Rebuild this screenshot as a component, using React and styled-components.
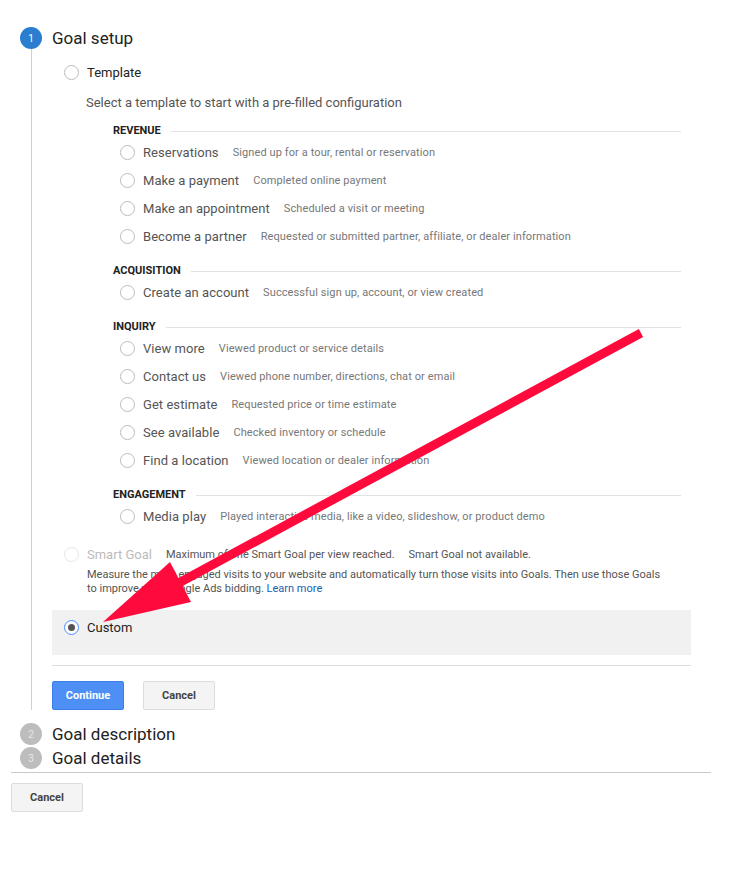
import React from "react";
import styled, { createGlobalStyle } from "styled-components";

const Global = createGlobalStyle`
  html, body { margin: 0; padding: 0; background: #fff; }
  body { font-family: Roboto, "Noto Sans", Arial, sans-serif; color: #222; }
`;

const Page = styled.div`
  position: relative;
  width: 753px;
  min-height: 878px;
`;

const Wizard = styled.div`
  margin-left: 11px;
  width: 700px;
  padding-top: 27px;
`;

const Steps = styled.div`
  padding-left: 9px;
  border-bottom: 1px solid #c8c8c8;
`;

const Step = styled.div`
  display: grid;
  grid-template-columns: 22px 1fr;
  column-gap: 10px;
  padding-bottom: ${(p) => p.$pb || 0}px;
  position: relative;
`;

const Rail = styled.div`
  display: flex;
  flex-direction: column;
  align-items: center;
`;

const Circle = styled.div`
  width: 22px;
  height: 22px;
  border-radius: 50%;
  background: ${(p) => (p.$active ? "#2b7dd0" : "#bdbdbd")};
  color: ${(p) => (p.$active ? "#fff" : "#e8e8e8")};
  font-size: 10px;
  display: flex;
  align-items: center;
  justify-content: center;
  flex: none;
`;

const RailLine = styled.div`
  width: 1px;
  flex: 1;
  background: #cfcfcf;
`;

const Content = styled.div`
  width: 639px;
`;

const StepTitle = styled.div`
  font-size: 17px;
  line-height: 22px;
  height: 22px;
  color: #222;
`;

const OptionRow = styled.div`
  display: flex;
  align-items: center;
  height: ${(p) => p.$h || 22}px;
  margin-top: ${(p) => p.$mt || 0}px;
  padding-left: 12px;
`;

const Radio = styled.span`
  box-sizing: border-box;
  width: 15px;
  height: 15px;
  border-radius: 50%;
  border: 1px solid ${(p) => (p.$checked ? "#4d90fe" : p.$disabled ? "#e6e6e6" : "#bdbdbd")};
  background: #fff;
  display: inline-flex;
  align-items: center;
  justify-content: center;
  flex: none;
  &::after {
    content: "";
    display: ${(p) => (p.$checked ? "block" : "none")};
    width: 7px;
    height: 7px;
    border-radius: 50%;
    background: #555;
  }
`;

const OptionLabel = styled.span`
  font-size: 13px;
  color: ${(p) => (p.$disabled ? "#bbb" : "#222")};
  margin-left: 8px;
`;

const Hint = styled.div`
  margin: 12px 0 0 34px;
  font-size: 13px;
  line-height: 16px;
  color: #555;
`;

const TemplateList = styled.div`
  margin: 11px 10px 0 61px;
`;

const Category = styled.div`
  margin-top: ${(p) => (p.$first ? 0 : 12)}px;
`;

const CategoryHeader = styled.div`
  display: flex;
  align-items: center;
  height: 16px;
  font-size: 11px;
  font-weight: 700;
  color: #222;
  gap: 10px;
  &::after {
    content: "";
    flex: 1;
    height: 1px;
    margin-top: 3px;
    background: #e2e2e2;
  }
`;

const Item = styled.div`
  display: flex;
  align-items: center;
  height: 28px;
  padding-left: 7px;
`;

const ItemLabel = styled.span`
  font-size: 13px;
  color: #555;
  margin-left: 8px;
  margin-right: 14px;
  letter-spacing: 0.05px;
`;

const ItemDesc = styled.span`
  font-size: 11px;
  color: #777;
  letter-spacing: 0.1px;
`;

const SmartRow = styled.div`
  display: flex;
  align-items: center;
  height: 20px;
  margin-top: 14px;
  padding-left: 12px;
`;

const SmartNote = styled.span`
  font-size: 11px;
  color: #555;
  margin-left: 14px;
`;

const SmartDesc = styled.div`
  margin: 4px 0 0 35px;
  font-size: 11px;
  line-height: 14px;
  color: #555;
  a {
    color: #1a5fb4;
    text-decoration: none;
  }
`;

const CustomBox = styled.div`
  margin-top: 14px;
  height: 45px;
  background: #f1f1f1;
  padding-top: 8px;
  box-sizing: border-box;
`;

const Divider = styled.div`
  height: 1px;
  background: #ddd;
  margin-top: 10px;
`;

const ButtonRow = styled.div`
  display: flex;
  gap: 19px;
  margin-top: ${(p) => p.$mt || 0}px;
`;

const Button = styled.button`
  box-sizing: border-box;
  width: 72px;
  height: 29px;
  border-radius: 2px;
  font-family: Roboto, Arial, sans-serif;
  font-size: 11px;
  font-weight: 700;
  padding: 0;
  cursor: pointer;
  border: 1px solid ${(p) => (p.$primary ? "#3b7ee8" : "#dcdcdc")};
  background: ${(p) => (p.$primary ? "#4d8ff5" : "#f4f4f4")};
  color: ${(p) => (p.$primary ? "#fff" : "#444")};
`;

const Footer = styled.div`
  padding-top: 10px;
`;

const ArrowLayer = styled.svg`
  position: absolute;
  left: 0;
  top: 0;
  pointer-events: none;
`;

const categories = [
  {
    name: "REVENUE",
    items: [
      ["Reservations", "Signed up for a tour, rental or reservation"],
      ["Make a payment", "Completed online payment"],
      ["Make an appointment", "Scheduled a visit or meeting"],
      ["Become a partner", "Requested or submitted partner, affiliate, or dealer information"],
    ],
  },
  {
    name: "ACQUISITION",
    items: [["Create an account", "Successful sign up, account, or view created"]],
  },
  {
    name: "INQUIRY",
    items: [
      ["View more", "Viewed product or service details"],
      ["Contact us", "Viewed phone number, directions, chat or email"],
      ["Get estimate", "Requested price or time estimate"],
      ["See available", "Checked inventory or schedule"],
      ["Find a location", "Viewed location or dealer information"],
    ],
  },
  {
    name: "ENGAGEMENT",
    items: [["Media play", "Played interactive media, like a video, slideshow, or product demo"]],
  },
];

export default function App() {
  return (
    <Page>
      <Global />
      <Wizard>
        <Steps>
          <Step $pb={13}>
            <Rail>
              <Circle $active>1</Circle>
              <RailLine />
            </Rail>
            <Content>
              <StepTitle>Goal setup</StepTitle>
              <OptionRow $mt={12}>
                <Radio />
                <OptionLabel>Template</OptionLabel>
              </OptionRow>
              <Hint>Select a template to start with a pre-filled configuration</Hint>
              <TemplateList>
                {categories.map((c, i) => (
                  <Category key={c.name} $first={i === 0}>
                    <CategoryHeader>{c.name}</CategoryHeader>
                    {c.items.map(([label, desc]) => (
                      <Item key={label}>
                        <Radio />
                        <ItemLabel>{label}</ItemLabel>
                        <ItemDesc>{desc}</ItemDesc>
                      </Item>
                    ))}
                  </Category>
                ))}
              </TemplateList>
              <SmartRow>
                <Radio $disabled />
                <OptionLabel $disabled>Smart Goal</OptionLabel>
                <SmartNote>Maximum of one Smart Goal per view reached.</SmartNote>
                <SmartNote>Smart Goal not available.</SmartNote>
              </SmartRow>
              <SmartDesc>
                Measure the most engaged visits to your website and automatically turn those visits into Goals. Then use those Goals
                <br />
                to improve your Google Ads bidding. <a href="#">Learn more</a>
              </SmartDesc>
              <CustomBox>
                <OptionRow $h={18}>
                  <Radio $checked />
                  <OptionLabel>Custom</OptionLabel>
                </OptionRow>
              </CustomBox>
              <Divider />
              <ButtonRow $mt={15}>
                <Button $primary>Continue</Button>
                <Button>Cancel</Button>
              </ButtonRow>
            </Content>
          </Step>
          <Step $pb={2}>
            <Rail>
              <Circle>2</Circle>
            </Rail>
            <StepTitle>Goal description</StepTitle>
          </Step>
          <Step $pb={3}>
            <Rail>
              <Circle>3</Circle>
            </Rail>
            <StepTitle>Goal details</StepTitle>
          </Step>
        </Steps>
        <Footer>
          <Button>Cancel</Button>
        </Footer>
      </Wizard>
      <ArrowLayer width="753" height="878" viewBox="0 0 753 878">
        <line x1="641" y1="333" x2="175" y2="585" stroke="#ff0a3c" strokeWidth="9" />
        <polygon points="103,622 170,562 191,602" fill="#ff0a3c" />
      </ArrowLayer>
    </Page>
  );
}
